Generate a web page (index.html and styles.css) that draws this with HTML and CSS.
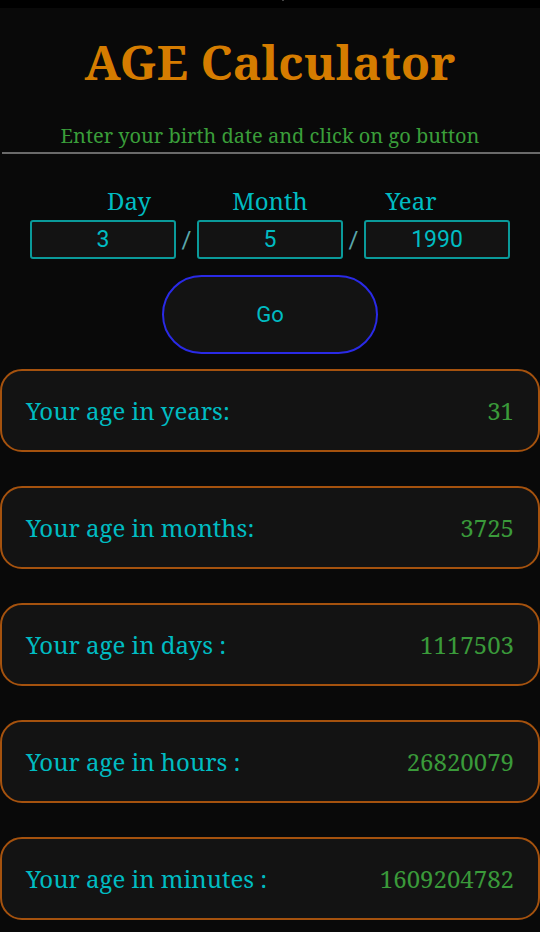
FILE: index.html
```html
<!DOCTYPE html>
<html>
<head>
<meta charset="utf-8">
<link rel="stylesheet" href="styles.css">
</head>
<body>
<div class="topbar"><span class="dot"></span></div>
<main class="page">
  <h1 class="title">AGE Calculator</h1>
  <p class="subtitle">Enter your birth date and click on go button</p>
  <div class="rule"></div>
  <div class="labels">
    <span class="label">Day</span>
    <span class="label">Month</span>
    <span class="label">Year</span>
  </div>
  <div class="inputs">
    <div class="field">3</div>
    <span class="slash">/</span>
    <div class="field">5</div>
    <span class="slash">/</span>
    <div class="field">1990</div>
  </div>
  <div class="go-wrap"><button class="go">Go</button></div>
  <section class="results">
    <div class="card"><span class="card-label">Your age in years:</span><span class="card-value">31</span></div>
    <div class="card"><span class="card-label">Your age in months:</span><span class="card-value">3725</span></div>
    <div class="card"><span class="card-label">Your age in days :</span><span class="card-value">1117503</span></div>
    <div class="card"><span class="card-label">Your age in hours :</span><span class="card-value">26820079</span></div>
    <div class="card"><span class="card-label">Your age in minutes :</span><span class="card-value">1609204782</span></div>
  </section>
</main>
</body>
</html>
```
FILE: styles.css
```css
html, body {
  margin: 0;
  padding: 0;
  background: #090909;
  height: 932px;
  overflow: hidden;
}
body {
  font-family: "Noto Serif", "DejaVu Serif", serif;
}
.topbar {
  height: 8px;
  background: #000;
  position: relative;
}
.dot {
  position: absolute;
  left: 282px;
  top: 0;
  width: 2px;
  height: 1px;
  background: #444;
}
.page {
  display: flex;
  flex-direction: column;
}
.title {
  margin: 0;
  padding-top: 25px;
  text-align: center;
  font-size: 48px;
  line-height: 58px;
  font-weight: bold;
  color: #d57c00;
}
.subtitle {
  margin: 0;
  padding-top: 32px;
  text-align: center;
  font-size: 20px;
  line-height: 26px;
  color: #3a9e3a;
}
.rule {
  margin: 3px 0 0 2px;
  height: 2px;
  background: #6a6a6a;
}
.labels {
  display: flex;
  justify-content: center;
  margin-top: 32px;
}
.label {
  width: 141px;
  text-align: center;
  font-size: 24px;
  line-height: 30px;
  color: #00bcc2;
}
.inputs {
  display: flex;
  justify-content: center;
  align-items: center;
  margin-top: 4px;
}
.field {
  box-sizing: border-box;
  width: 146px;
  height: 39px;
  border: 2px solid #0a9a9a;
  border-radius: 3px;
  background: #131313;
  color: #00bcc2;
  font-family: Roboto, "Noto Sans", sans-serif;
  font-size: 23px;
  line-height: 35px;
  text-align: center;
}
.slash {
  width: 21px;
  text-align: center;
  color: #5aa6aa;
  font-family: Roboto, "Noto Sans", sans-serif;
  font-size: 24px;
}
.go-wrap {
  display: flex;
  justify-content: center;
  margin-top: 16px;
}
.go {
  box-sizing: border-box;
  width: 216px;
  height: 79px;
  border: 2px solid #2a2ae6;
  border-radius: 40px;
  background: #131313;
  color: #00bcc2;
  font-family: Roboto, "Noto Sans", sans-serif;
  font-size: 22px;
  padding: 0;
}
.results {
  display: flex;
  flex-direction: column;
  gap: 34px;
  margin-top: 15px;
}
.card {
  box-sizing: border-box;
  height: 83px;
  border: 2px solid #a5520e;
  border-radius: 22px;
  background: #131313;
  display: flex;
  justify-content: space-between;
  align-items: center;
  padding: 0 24px 0 24px;
  font-size: 24px;
}
.card-label {
  color: #00bcc2;
}
.card-value {
  color: #3a9a3a;
}
```
